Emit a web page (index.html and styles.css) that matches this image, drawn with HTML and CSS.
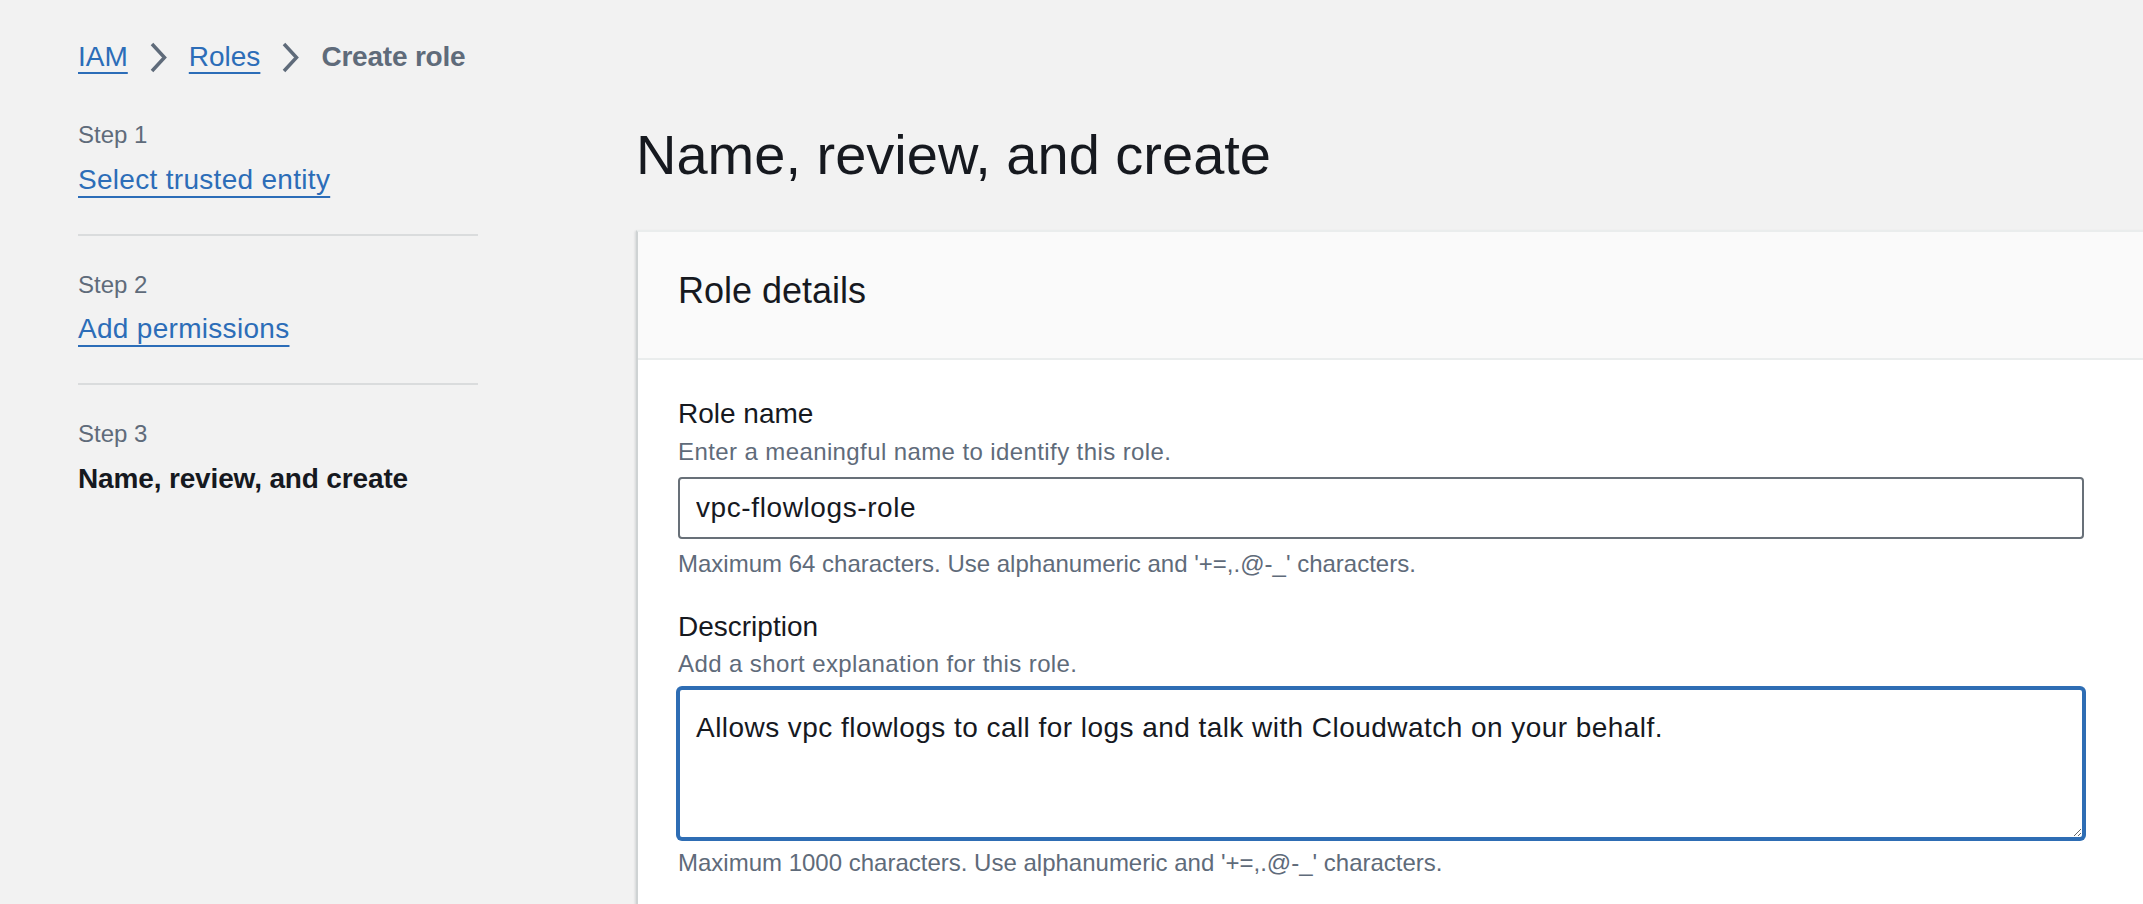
FILE: index.html
```html
<!DOCTYPE html>
<html lang="en">
<head>
<meta charset="utf-8">
<title>Create role</title>
<link rel="stylesheet" href="styles.css">
</head>
<body>
<div class="page">
  <nav class="breadcrumbs">
    <a class="crumb-link" href="#">IAM</a>
    <svg class="chev" width="19" height="31" viewBox="0 0 19 31" aria-hidden="true"><polyline points="3,2 15.5,15.5 3,29" fill="none" stroke="#5f6b7a" stroke-width="3.5" stroke-linejoin="miter"/></svg>
    <a class="crumb-link" href="#">Roles</a>
    <svg class="chev" width="19" height="31" viewBox="0 0 19 31" aria-hidden="true"><polyline points="3,2 15.5,15.5 3,29" fill="none" stroke="#5f6b7a" stroke-width="3.5" stroke-linejoin="miter"/></svg>
    <span class="crumb-current">Create role</span>
  </nav>
  <div class="layout">
    <aside class="steps">
      <div class="step">
        <div class="step-num">Step 1</div>
        <a class="step-link" href="#">Select trusted entity</a>
      </div>
      <div class="step">
        <div class="step-num">Step 2</div>
        <a class="step-link" href="#">Add permissions</a>
      </div>
      <div class="step">
        <div class="step-num">Step 3</div>
        <div class="step-current">Name, review, and create</div>
      </div>
    </aside>
    <main class="main">
      <h1 class="title">Name, review, and create</h1>
      <section class="panel">
        <header class="panel-head">
          <h2 class="panel-title">Role details</h2>
        </header>
        <div class="panel-body">
          <div class="field">
            <label class="field-label" for="role-name">Role name</label>
            <div class="field-desc">Enter a meaningful name to identify this role.</div>
            <input class="text-input" id="role-name" type="text" value="vpc-flowlogs-role">
            <div class="field-constraint">Maximum 64 characters. Use alphanumeric and '+=,.@-_' characters.</div>
          </div>
          <div class="field field-gap">
            <label class="field-label" for="role-desc">Description</label>
            <div class="field-desc">Add a short explanation for this role.</div>
            <textarea class="text-area" id="role-desc">Allows vpc flowlogs to call for logs and talk with Cloudwatch on your behalf.</textarea>
            <div class="field-constraint">Maximum 1000 characters. Use alphanumeric and '+=,.@-_' characters.</div>
          </div>
        </div>
      </section>
    </main>
  </div>
</div>
</body>
</html>
```
FILE: styles.css
```css
html, body {
  margin: 0;
  padding: 0;
  overflow: hidden;
}
body {
  background: #f2f2f2;
  font-family: "Liberation Sans", Arial, sans-serif;
  color: #16191f;
  width: 2143px;
  height: 904px;
}
.page {
  padding-left: 78px;
}
.breadcrumbs {
  display: flex;
  align-items: center;
  gap: 21px;
  padding-top: 37px;
  height: 40px;
  font-size: 28px;
  line-height: 40px;
}
.crumb-link {
  color: #2c6db8;
  text-decoration: underline;
  text-decoration-thickness: 2px;
  text-underline-offset: 6px;
}
.chev {
  display: block;
  flex: none;
}
.crumb-current {
  color: #5f6b7a;
  font-weight: bold;
  letter-spacing: -0.2px;
}
.layout {
  display: flex;
  align-items: flex-start;
}
.steps {
  width: 400px;
  flex: none;
  padding-top: 42px;
  margin-right: 158px;
}
.step {
  display: flex;
  flex-direction: column;
  align-items: flex-start;
  padding: 33px 0 34px;
  border-top: 2px solid #dadcdd;
}
.step:first-child {
  padding-top: 0;
  border-top: none;
}
.step-num {
  font-size: 24px;
  line-height: 32px;
  color: #5f6b7a;
  margin-bottom: 8.5px;
}
.step-link {
  font-size: 28px;
  line-height: 40px;
  color: #2c6db8;
  letter-spacing: 0.3px;
  text-decoration: underline;
  text-decoration-thickness: 2px;
  text-underline-offset: 7px;
}
.step-current {
  font-size: 28px;
  line-height: 40px;
  font-weight: bold;
  letter-spacing: -0.15px;
  color: #16191f;
}
.main {
  flex: 1;
  min-width: 0;
  padding-top: 44px;
  margin-right: -40px;
}
.title {
  margin: 0 0 41px;
  font-size: 56px;
  line-height: 68px;
  font-weight: normal;
  color: #16191f;
}
.panel {
  background: #ffffff;
  border-top: 2px solid #eaeded;
  border-left: 2px solid #cfd3d4;
  box-shadow: -1px 1px 2px rgba(0, 28, 36, 0.12);
  height: 700px;
}
.panel-head {
  background: #fafafa;
  padding: 37px 40px 45px;
  border-bottom: 2px solid #eaeded;
}
.panel-title {
  margin: 0;
  font-size: 36px;
  line-height: 44px;
  font-weight: normal;
  color: #16191f;
}
.panel-body {
  padding: 34px 40px;
}
.field {
  display: flex;
  flex-direction: column;
  align-items: flex-start;
}
.field-gap {
  margin-top: 26.5px;
}
.field-label {
  font-size: 28px;
  line-height: 40px;
  color: #16191f;
}
.field-desc {
  margin-top: 1.5px;
  font-size: 24px;
  line-height: 32px;
  letter-spacing: 0.4px;
  color: #5f6b7a;
}
.text-input {
  box-sizing: border-box;
  margin: 9px 0 0;
  width: 1406px;
  height: 62px;
  padding: 0 16px;
  border: 2px solid #687078;
  border-radius: 4px;
  background: #ffffff;
  font-family: inherit;
  font-size: 28px;
  line-height: 40px;
  letter-spacing: 0.6px;
  color: #16191f;
  outline: none;
}
.text-area {
  box-sizing: border-box;
  display: block;
  margin: 8px 0 0;
  width: 1406px;
  height: 151px;
  padding: 18px 16px;
  border: 2px solid #2e6db4;
  box-shadow: 0 0 0 2px #2e6db4;
  border-radius: 4px;
  background: #ffffff;
  font-family: inherit;
  font-size: 28px;
  line-height: 40px;
  letter-spacing: 0.45px;
  color: #16191f;
  resize: vertical;
  outline: none;
}
.field-constraint {
  margin-top: 9.5px;
  font-size: 24px;
  line-height: 32px;
  color: #5f6b7a;
}
.field-gap .field-constraint {
  margin-top: 8px;
}
```
